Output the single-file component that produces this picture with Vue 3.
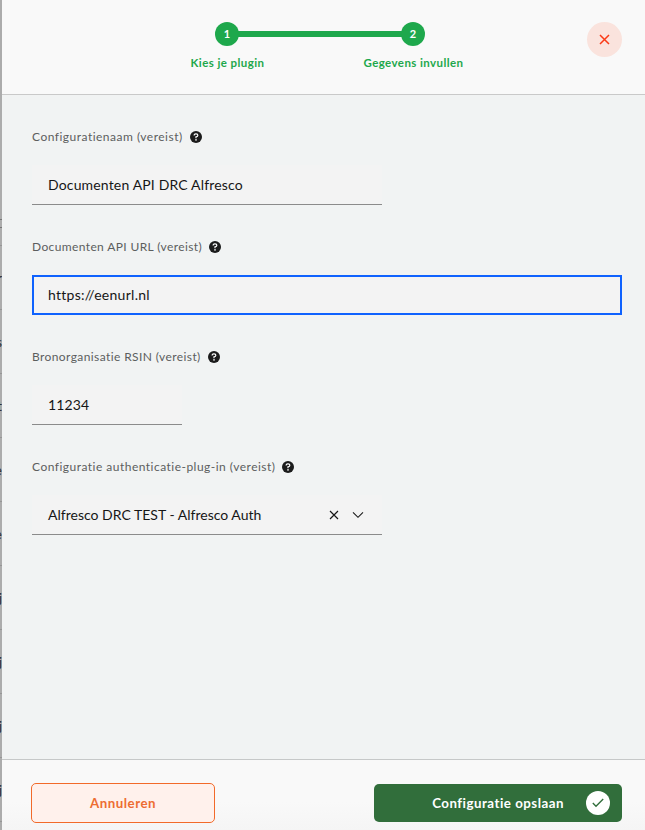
<script setup>
import { ref } from 'vue'

const steps = [
  { number: 1, label: 'Kies je plugin' },
  { number: 2, label: 'Gegevens invullen' },
]

const fields = ref([
  { id: 'name', label: 'Configuratienaam (vereist)', value: 'Documenten API DRC Alfresco' },
  { id: 'url', label: 'Documenten API URL (vereist)', value: 'https://eenurl.nl' },
  { id: 'rsin', label: 'Bronorganisatie RSIN (vereist)', value: '11234' },
  { id: 'auth', label: 'Configuratie authenticatie-plug-in (vereist)', value: 'Alfresco DRC TEST - Alfresco Auth', select: true },
])

const rows = ['r', 's', 't', 'e', 'e', 'j', 'j', 'j', 'j']
</script>

<template>
  <div class="screen">
    <aside class="backdrop">
      <div class="table-head"></div>
      <div v-for="(row, i) in rows" :key="i" class="table-row"><span>{{ row }}</span></div>
    </aside>
    <section class="panel">
      <header class="head">
        <div class="stepper">
          <div v-for="step in steps" :key="step.number" class="step">
            <span class="dot">{{ step.number }}</span>
            <span class="step-label">{{ step.label }}</span>
          </div>
        </div>
        <button class="close" aria-label="Sluiten">
          <svg width="11" height="11" viewBox="0 0 11 11"><path d="M1 1L10 10M10 1L1 10" fill="none" stroke="#fa3a16" stroke-width="1.5" /></svg>
        </button>
      </header>
      <main class="form">
        <div v-for="field in fields" :key="field.id" class="field" :class="field.id">
          <div class="label">
            <span>{{ field.label }}</span>
            <svg class="help" width="12" height="12" viewBox="0 0 12 12">
              <circle cx="6" cy="6" r="6" fill="#1b1b1b" />
              <path d="M4.15 4.6V4.4C4.15 3.4 4.85 2.8 5.8 2.8H6.1C7.15 2.8 7.85 3.4 7.85 4.3C7.85 5.25 7.15 5.75 6 5.8V7.2" fill="none" stroke="#fff" stroke-width="1.2" />
              <circle cx="6" cy="8.9" r=".8" fill="#fff" />
            </svg>
          </div>
          <div class="control">
            <span class="value">{{ field.value }}</span>
            <span v-if="field.select" class="icons">
              <svg width="10" height="10" viewBox="0 0 10 10"><path d="M1 1L9 9M9 1L1 9" fill="none" stroke="#161616" stroke-width="1.15" /></svg>
              <svg width="12" height="8" viewBox="0 0 12 8"><path d="M1 1.4L6 6.3L11 1.4" fill="none" stroke="#161616" stroke-width="1.05" /></svg>
            </span>
          </div>
        </div>
      </main>
      <footer class="foot">
        <button class="cancel">Annuleren</button>
        <button class="save">
          <span>Configuratie opslaan</span>
          <span class="check">
            <svg width="12" height="10" viewBox="0 0 12 10"><path d="M.8 5.1L4 8.3L11.2 1" fill="none" stroke="#316e3b" stroke-width="1.35" /></svg>
          </span>
        </button>
      </footer>
    </section>
  </div>
</template>

<style>
body { margin: 0; overflow: hidden; }
</style>

<style scoped>
* { box-sizing: border-box; }
.screen { display: flex; width: 645px; height: 830px; overflow: hidden; font-family: Lato, "Open Sans", sans-serif; color: #161616; background: #f1f3f3; }
button { font-family: inherit; margin: 0; }
.backdrop { width: 2px; flex: none; overflow: hidden; background: #acacac; }
.table-head { height: 246px; border-bottom: 1px solid #969696; background: linear-gradient(#777, #777) 0 219px / 2px 1px no-repeat, linear-gradient(#777, #777) 0 227px / 2px 1px no-repeat; }
.table-row { display: flex; align-items: center; justify-content: flex-end; height: 64px; border-bottom: 1px solid #969696; font-size: 14px; color: #303030; }
.panel { display: flex; flex: 1; flex-direction: column; min-width: 0; }
.head { display: flex; justify-content: space-between; height: 95px; flex: none; padding: 22px 23px 0 132px; background: #f9f9f9; border-bottom: 1px solid #c9c9c9; }
.stepper { display: flex; height: 54px; background: linear-gradient(#1ea84c, #1ea84c) 93px 9px / 186px 6px no-repeat; }
.step { display: flex; width: 186px; flex-direction: column; align-items: center; }
.dot { display: flex; align-items: center; justify-content: center; width: 24px; height: 24px; border-radius: 50%; background: #1ea84c; color: #fff; font-size: 11px; font-weight: 700; line-height: 24px; }
.step-label { margin-top: 9px; padding-left: 1px; font-size: 11.5px; line-height: 16px; font-weight: 700; letter-spacing: .42px; color: #1ea84c; white-space: nowrap; }
.close { display: flex; align-items: center; justify-content: center; width: 35px; height: 35px; padding: 0; border: 0; border-radius: 50%; background: #fae3dd; }
.form { display: flex; flex: 1; flex-direction: column; padding: 34px 23px 0 30px; }
.field { height: 110px; }
.label { display: flex; align-items: center; height: 16px; gap: 7px; font-size: 12px; color: #5c5e5e; line-height: 16px; white-space: nowrap; letter-spacing: .49px; }
.url .label { letter-spacing: .38px; }
.rsin .label { letter-spacing: .4px; }
.auth .label { letter-spacing: .48px; }
.control { display: flex; align-items: center; justify-content: space-between; width: 350px; height: 40px; margin-top: 20px; padding: 0 18px 0 16px; border-bottom: 1px solid #8b8b8b; background: #f3f3f3; font-size: 14px; white-space: nowrap; letter-spacing: .16px; }
.value { line-height: 18px; padding-top: 1px; }
.url .value { padding: 0 0 1px; }
.url .control { width: 590px; padding: 0 14px; border: 2px solid #0f62fe; letter-spacing: .27px; }
.rsin .control { width: 150px; }
.auth .control { letter-spacing: .01px; }
.icons { display: flex; align-items: center; gap: 13px; padding-top: 1px; }
.foot { display: flex; justify-content: space-between; height: 71px; flex: none; padding: 23px 23px 0 29px; border-top: 1px solid #c6c8c8; background: linear-gradient(#f9f9f9 60%, #f5f5f5); }
.cancel { display: flex; align-items: center; justify-content: center; width: 184px; height: 40px; padding: 0; border: 1px solid #f26a2a; border-radius: 5px; background: #fff1ec; color: #ed6d32; font-size: 13.3px; font-weight: 700; letter-spacing: .5px; }
.save { display: flex; align-items: center; justify-content: flex-end; width: 248px; height: 38px; margin-top: 1px; padding: 0 12px 0 0; gap: 22px; border: 0; border-radius: 5px; background: #316e3b; color: #fff; font-size: 13.3px; font-weight: 700; letter-spacing: .5px; white-space: nowrap; }
.check { display: flex; align-items: center; justify-content: center; width: 24px; height: 24px; border-radius: 50%; background: #fff; }
</style>
